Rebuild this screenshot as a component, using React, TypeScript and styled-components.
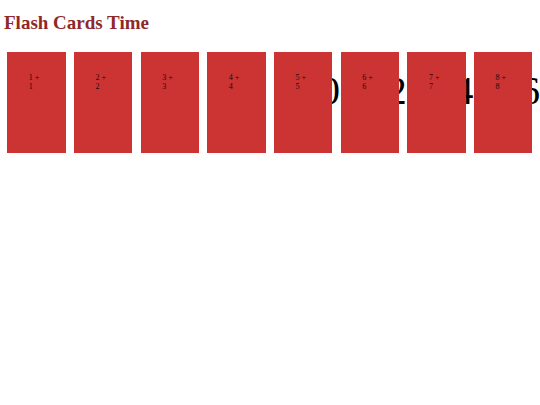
import styled, { createGlobalStyle } from 'styled-components';

type FlashCard = {
  id: number;
  a: number;
  b: number;
};

const cards: FlashCard[] = Array.from({ length: 8 }, (_, i) => ({ id: i + 1, a: i + 1, b: i + 1 }));

const GlobalStyle = createGlobalStyle`
  html, body {
    margin: 0;
    padding: 0;
    background: #ffffff;
    font-family: "Liberation Serif", "Times New Roman", serif;
  }
`;

export default function App() {
  return (
    <>
      <GlobalStyle />
      <StyledPage>
        <StyledTitle>Flash Cards Time</StyledTitle>
        <StyledDeck>
          {cards.map((card) => (
            <StyledCard key={card.id}>
              <StyledAnswer>{card.a + card.b}</StyledAnswer>
              <StyledFace>
                {card.a} + {card.b}
              </StyledFace>
            </StyledCard>
          ))}
        </StyledDeck>
      </StyledPage>
    </>
  );
}

const StyledPage = styled.div`
  display: flex;
  flex-direction: column;
  padding: 12px 0 0 0;
`;

const StyledTitle = styled.h1`
  margin: 0 0 0 4px;
  font-size: 19px;
  font-weight: 700;
  line-height: 21px;
  color: #902828;
`;

const StyledDeck = styled.div`
  display: flex;
  flex-direction: row;
  gap: 8.4px;
  margin: 19px 0 0 7.3px;
`;

const StyledCard = styled.div`
  position: relative;
  flex: none;
  width: 58.3px;
  height: 100.7px;
`;

const StyledAnswer = styled.span`
  position: absolute;
  top: 17px;
  left: 26px;
  font-size: 40px;
  line-height: 44px;
  color: #000000;
  white-space: nowrap;
`;

const StyledFace = styled.div`
  position: relative;
  z-index: 1;
  box-sizing: border-box;
  width: 100%;
  height: 100%;
  padding: 21px 21.5px;
  background: #cc3333;
  font-size: 8px;
  line-height: 9px;
  color: #1a0a0a;
`;
